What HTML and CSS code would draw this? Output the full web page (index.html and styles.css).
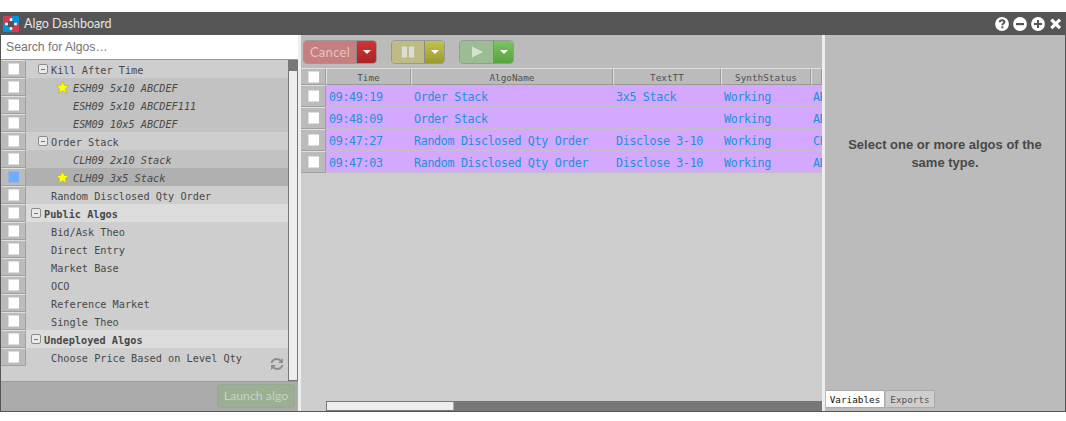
FILE: index.html
```html
<!DOCTYPE html>
<html lang="en">
<head>
<meta charset="utf-8">
<title>Algo Dashboard</title>
<link rel="stylesheet" href="styles.css">
</head>
<body>
<div class="window">
  <header class="titlebar">
    <svg class="logo" width="16" height="16" viewBox="0 0 16 16"><path fill="#d43a55" d="M0 0h8v8H0zM8 8h8v8H8z"/><path fill="#0095da" d="M8 0h8v8H8zM0 8h8v8H0z"/><path fill="#555" d="M5 5h6v6H5z"/><path fill="#fff" d="M6.7 2.3h2.6v2.6H6.7zM6.7 11.2h2.6v2.6H6.7zM2.2 6.8h2.6v2.4H2.2zM11.2 6.8h2.6v2.4h-2.6z"/></svg>
    <h1 class="title">Algo Dashboard</h1>
    <div class="controls">
      <svg width="14" height="14" viewBox="0 0 14 14"><circle cx="7" cy="7" r="6.9" fill="#fff"/><path d="M4.7 5.2C4.8 3.7 5.8 3.2 7 3.2c1.400 0 2.400.7 2.400 1.900 0 1.500-2.100 1.500-2.100 3.200" fill="none" stroke="#555" stroke-width="1.900"/><path fill="#555" d="M6.300 9.300h2v1.900h-2z"/></svg>
      <svg width="14" height="14" viewBox="0 0 14 14"><circle cx="7" cy="7" r="6.9" fill="#fff"/><path fill="#555" d="M3 6h8v2.200H3z"/></svg>
      <svg width="14" height="14" viewBox="0 0 14 14"><circle cx="7" cy="7" r="6.9" fill="#fff"/><path fill="#555" d="M3 6h3V3h2.100v3h3v2.100h-3v3H6v-3H3z"/></svg>
      <svg width="14" height="14" viewBox="0 0 14 14"><path d="M3.500 3.700l6.400 6.400M9.900 3.700l-6.400 6.400" stroke="#fff" stroke-width="3.200" stroke-linecap="square"/></svg>
    </div>
  </header>
  <div class="panes">
    <section class="left">
      <div class="search">Search for Algos…</div>
      <div class="tree-wrap">
        <div class="tree">
          <div class="row type"><i class="check"></i><b class="toggle"></b><span>Kill After Time</span></div>
          <div class="row instance"><i class="check"></i><svg class="star" viewBox="0 0 12 12"><path d="M6 .2l1.700 3.800 4 .4-3 2.700.9 4.200L6 9.100l-3.600 2.200.9-4.200-3-2.700 4-.4z"/></svg><span>ESH09 5x10 ABCDEF</span></div>
          <div class="row instance"><i class="check"></i><span>ESH09 5x10 ABCDEF111</span></div>
          <div class="row instance"><i class="check"></i><span>ESM09 10x5 ABCDEF</span></div>
          <div class="row type"><i class="check"></i><b class="toggle"></b><span>Order Stack</span></div>
          <div class="row instance"><i class="check"></i><span>CLH09 2x10 Stack</span></div>
          <div class="row instance selected"><i class="check"></i><svg class="star" viewBox="0 0 12 12"><path d="M6 .2l1.700 3.800 4 .4-3 2.700.9 4.200L6 9.100l-3.600 2.200.9-4.200-3-2.700 4-.4z"/></svg><span>CLH09 3x5 Stack</span></div>
          <div class="row type"><i class="check"></i><span>Random Disclosed Qty Order</span></div>
          <div class="row group"><i class="check"></i><b class="toggle"></b><span>Public Algos</span></div>
          <div class="row type"><i class="check"></i><span>Bid/Ask Theo</span></div>
          <div class="row type"><i class="check"></i><span>Direct Entry</span></div>
          <div class="row type"><i class="check"></i><span>Market Base</span></div>
          <div class="row type"><i class="check"></i><span>OCO</span></div>
          <div class="row type"><i class="check"></i><span>Reference Market</span></div>
          <div class="row type"><i class="check"></i><span>Single Theo</span></div>
          <div class="row group"><i class="check"></i><b class="toggle"></b><span>Undeployed Algos</span></div>
          <div class="row type"><i class="check"></i><span>Choose Price Based on Level Qty</span></div>
          <svg class="refresh" width="14" height="14" viewBox="0 0 14 14"><path d="M1.500 6C2.300 3.300 4.400 2 7 2c2 0 3.500 1 4.500 2.500M12.500 8c-.8 2.700-2.900 4-5.500 4-2 0-3.500-1-4.500-2.500" fill="none" stroke="#8d8d8d" stroke-width="1.900"/><path fill="#8d8d8d" d="M13 1v5H8zM1 13V8h5z"/></svg>
        </div>
        <div class="vscroll"><div class="vthumb"></div></div>
      </div>
      <footer class="footer"><div class="launch">Launch algo</div></footer>
    </section>
    <div class="splitter"></div>
    <section class="middle">
      <div class="toolbar">
        <div class="btn cancel"><span class="main">Cancel</span><span class="drop"></span></div>
        <div class="btn pause"><span class="main"><svg width="12" height="12" viewBox="0 0 12 12"><path d="M0 .5h5v11H0zM7 .5h5v11H7z"/></svg></span><span class="drop"></span></div>
        <div class="btn play"><span class="main"><svg width="12" height="12" viewBox="0 0 12 12"><path d="M1 .5l11 5.500-11 5.500z"/></svg></span><span class="drop"></span></div>
      </div>
      <div class="grid head"><i class="check"></i><span>Time</span><span>AlgoName</span><span>TextTT</span><span>SynthStatus</span><span></span></div>
      <div class="grid data"><i class="check"></i><span>09:49:19</span><span>Order Stack</span><span>3x5 Stack</span><span>Working</span><span>AB</span></div>
      <div class="grid data"><i class="check"></i><span>09:48:09</span><span>Order Stack</span><span></span><span>Working</span><span>AB</span></div>
      <div class="grid data"><i class="check"></i><span>09:47:27</span><span>Random Disclosed Qty Order</span><span>Disclose 3-10</span><span>Working</span><span>CL</span></div>
      <div class="grid data"><i class="check"></i><span>09:47:03</span><span>Random Disclosed Qty Order</span><span>Disclose 3-10</span><span>Working</span><span>AB</span></div>
      <div class="hscroll"><div class="hthumb"></div></div>
    </section>
    <div class="splitter"></div>
    <section class="right">
      <p class="message">Select one or more algos of the<br>same type.</p>
      <nav class="tabs"><span class="tab active">Variables</span><span class="tab">Exports</span></nav>
    </section>
  </div>
</div>
</body>
</html>
```
FILE: styles.css
```css
* { box-sizing: border-box; }
body { margin: 0; padding-top: 12px; height: 421px; background: #fff; overflow: hidden; font-family: "Liberation Sans", Arial, sans-serif; }
.window { height: 400px; border: 1px solid #555; border-top: 0; display: flex; flex-direction: column; }
.titlebar { height: 23px; flex: none; background: #555; display: flex; align-items: center; padding: 0 2px; }
.logo { flex: none; }
.title { flex: 1; margin: 0 0 0 5px; font: 400 12.5px/23px Lato, sans-serif; color: #e6e6e6; }
.controls { display: flex; gap: 4px; }
.controls svg { display: block; }
.panes { flex: 1; min-height: 0; display: flex; }
.splitter { width: 3px; flex: none; background: #eee; }

.left { width: 297px; flex: none; display: flex; flex-direction: column; }
.search { height: 25px; flex: none; border-bottom: 1px solid #999; background: #fff; color: #757575; font-size: 12.200px; line-height: 24px; padding-left: 5px; }
.tree-wrap { flex: 1; min-height: 0; display: flex; }
.tree { flex: 1; position: relative; background: #cecece; font: 10.24px/18px "DejaVu Sans Mono", monospace; color: #484848; }
.row { height: 18px; display: flex; align-items: center; background: linear-gradient(90deg, #bbb 25px, #cecece 25px); }
.row span { white-space: pre; padding-top: 2px; }
.row.instance { background: linear-gradient(90deg, #bbb 25px, #c2c2c2 25px); font-style: italic; }
.row.instance.selected { background: linear-gradient(90deg, #bbb 25px, #b0b0b0 25px); }
.row.group { background: linear-gradient(90deg, #bbb 25px, #dcdcdc 25px); font-weight: bold; }
.row .check { margin-right: 25px; }
.row.instance .check { margin-right: 47px; }
.row.instance:has(.star) .check { margin-right: 30px; }
.row.type:has(.toggle) .check { margin-right: 12px; }
.row.group .check { margin-right: 5px; }
.check { width: 25px; height: 100%; flex: none; border: 1px solid; border-color: #e0e0e0 #a0a0a0 #a0a0a0 #bbb; display: flex; align-items: center; justify-content: center; }
.check::before { content: ""; width: 10px; height: 10px; background: #fff; border: 1px solid #ddd; border-width: 1px 0 1px 1px; }
.selected .check::before { background: #70adff; border-color: #9ab4d5; }
.toggle { width: 10px; height: 10px; flex: none; margin-right: 3px; border: 1px solid #8b8b8b; border-radius: 2px; background: linear-gradient(#777, #777) center/4px 1px no-repeat, #e9e9e9; }
.star { width: 13px; height: 13px; flex: none; margin-right: 4px; fill: #ff0; stroke: #aaa137; stroke-width: .5; overflow: visible; }
.refresh { position: absolute; right: 4px; bottom: 10px; }
.vscroll { width: 10px; flex: none; border: 1px solid #777; border-top: 0; background: #eee; }
.vthumb { height: 11px; background: #777; }
.footer { height: 30px; flex: none; border-top: 1px solid #999; background: #ababab; display: flex; justify-content: flex-end; padding: 2px 3px 0 0; }
.launch { width: 78px; height: 24px; border: 1px solid #98a894; border-radius: 3px; background: #9bb092; color: #c9d2c5; font: 12.3px/22px Lato, sans-serif; text-align: center; white-space: nowrap; }

.middle { width: 521px; flex: none; background: #cdcdcd; display: flex; flex-direction: column; overflow: hidden; }
.toolbar { height: 33px; flex: none; background: #bbb; display: flex; padding: 5px 0 0 2px; }
.btn { width: 54px; height: 24px; display: flex; border: 1px solid #999; border-radius: 4px; overflow: hidden; margin-right: 14px; }
.btn.cancel { width: 74px; }
.btn.play { width: 55px; }
.main { flex: 1; display: flex; align-items: center; justify-content: center; font: 13px/22px Lato, sans-serif; letter-spacing: .3px; color: #e3c5c5; }
.main svg { fill: #dadfd6; }
.drop { width: 20px; border-left: 1px solid #888; display: flex; align-items: center; justify-content: center; }
.drop::before { content: ""; border: 4px solid transparent; border-top-color: #fff; border-bottom: 0; }
.cancel .main { background: #c67e7e; }
.cancel .drop { background: linear-gradient(#d33434, #a92525); }
.pause .main { background: #bebb86; }
.pause .drop { background: linear-gradient(#c3c24b, #9c9b32); }
.play .main { background: #9bbd91; }
.play .drop { background: linear-gradient(#7ac562, #59a240); }
.grid { flex: none; height: 22px; display: grid; grid-template-columns: 25px 85px 202px 108px 90px 1fr; background: #bbb; font-family: "DejaVu Sans Mono", monospace; }
.grid span { white-space: pre; overflow: hidden; }
.head { height: 17px; font-size: 9.35px; line-height: 17px; color: #505050; text-align: center; }
.head span { border: 1px solid; border-color: #e0e0e0 #999 #999 #e0e0e0; }
.data { font-size: 11.7px; letter-spacing: -.34px; line-height: 24px; color: #1b92d8; }
.data span { background: #d4a8ff; border-bottom: 1px solid #c4bdca; padding-left: 3px; }
.data span:last-child { padding-left: 2px; letter-spacing: -.5px; }
.hscroll { width: 496px; height: 10px; margin: auto 0 0 25px; background: #777; border: 1px solid #777; flex: none; }
.hthumb { width: 127px; height: 8px; background: #eee; border-right: 1px solid #aaa; }

.right { flex: 1; background: #bbb; display: flex; flex-direction: column; }
.message { margin: 101px 0 0; text-align: center; font-size: 13px; line-height: 18px; font-weight: bold; color: #484848; white-space: nowrap; }
.tabs { margin-top: auto; display: flex; gap: 1px; padding: 0 0 3px 1px; font: 9.35px/17px "DejaVu Sans Mono", monospace; }
.tab { height: 18px; width: 49px; text-align: center; color: #555; background: #cecece; border: 1px solid #aaa; border-left: 0; }
.tab.active { width: 59px; background: #fff; color: #111; }
```
